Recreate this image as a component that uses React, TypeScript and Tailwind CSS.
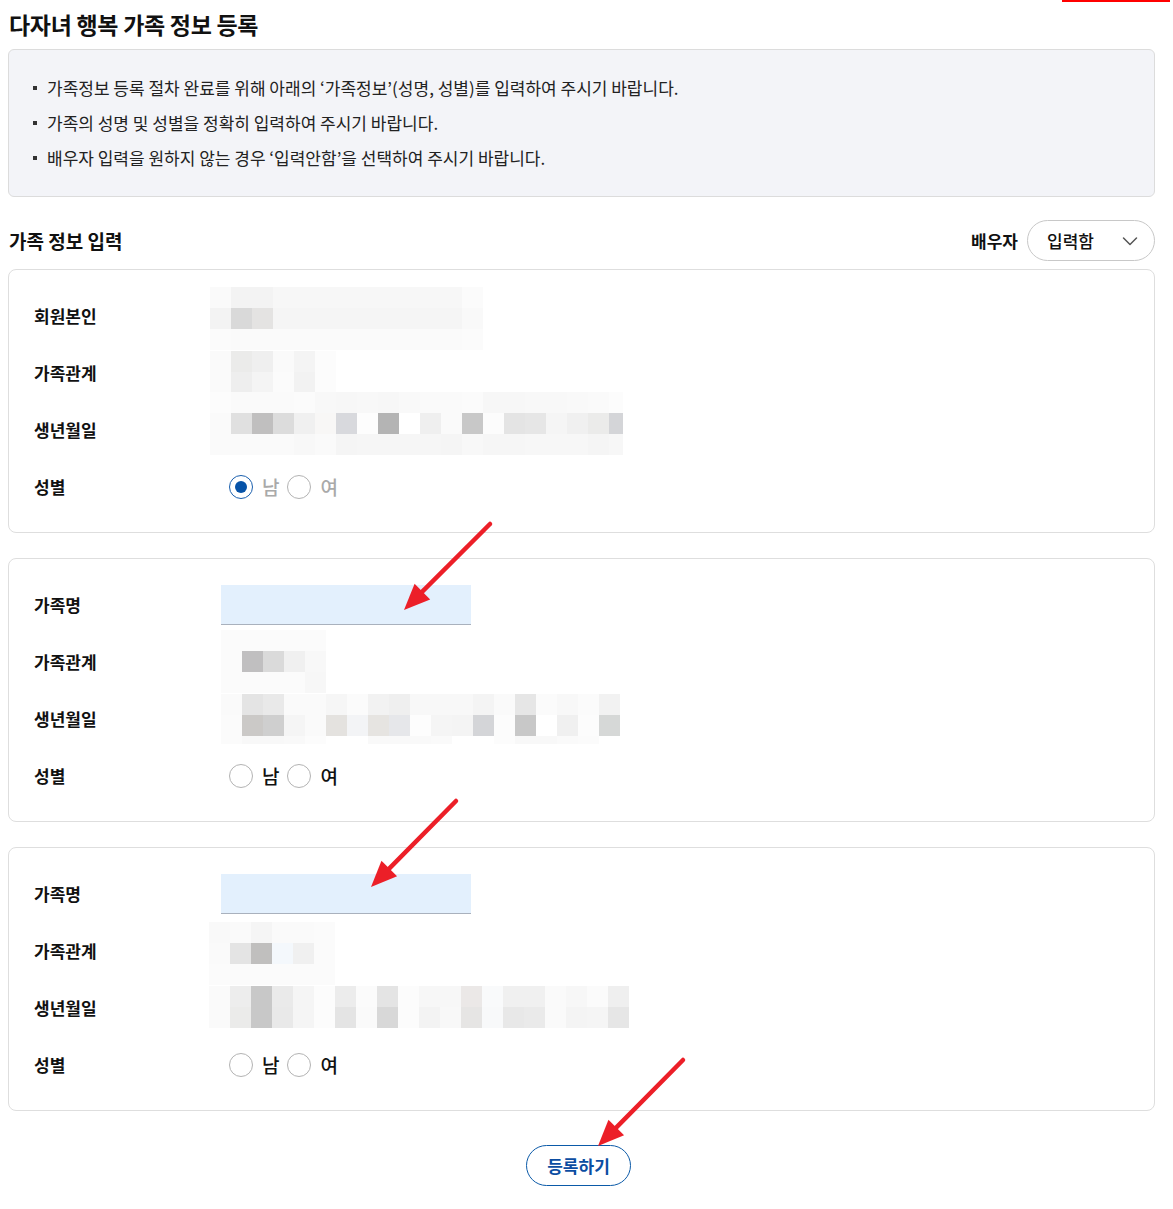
import React from "react";

const FONT = { fontFamily: '"Noto Sans CJK KR", "Noto Sans", sans-serif' };

type MosaicProps = { rows: string[][]; width: number; cell?: number; lastRowH?: number; className?: string };

function Mosaic({ rows, width, cell = 21, lastRowH, className }: MosaicProps) {
  const h = lastRowH ? (rows.length - 1) * cell + lastRowH : rows.length * cell;
  return (
    <svg width={width} height={h} viewBox={`0 0 ${width} ${h}`} className={className} shapeRendering="crispEdges">
      {rows.map((r, ri) =>
        r.map((c, ci) => (
          <rect key={`${ri}-${ci}`} x={ci * cell} y={ri * cell} width={cell} height={cell} fill={`#${c}`} />
        ))
      )}
    </svg>
  );
}

const rep = (c: string, n: number) => Array.from({ length: n }, () => c);

const m1a = [
  ["fafafa", "f3f3f3", "f3f3f3", ...rep("f7f7f7", 9), "fbfbfb"],
  ["f3f3f3", "d9d9d9", "e4e3e2", ...rep("f5f5f5", 9), "f9f9f9"],
  ["fbfbfb", ...rep("fafafa", 11), "fbfbfb"],
];
const m1b = [
  ["fafafa", "ebebea", "efefef", "fafafa", "f4f4f4", "fcfcfc"],
  ["fafafa", "eeeeee", "f4f4f4", "fbfbfb", "f2f2f2", "fcfcfc"],
];
const m1c = [
  ["fcfcfc", "fafafa", "fafafa", "fafafa", "fbfbfb", "f8f8f8", "f7f7f7", "f8f8f8", "f7f7f7", "f9f9f9", "fafafa", "fafafa", "fbfbfb", "f7f7f7", "f7f7f7", "f8f8f8", "f8f8f8", "f9f9f9", "fafafa", "fcfcfc"],
  ["fafafa", "e0e0e0", "c0bfbf", "dcdcdc", "f0f0f0", "f8f7f6", "d8d9dd", "fdfdfd", "b4b4b4", "ffffff", "efefef", "fafafa", "c8c8c8", "fcfcfc", "e4e4e4", "e6e6e6", "f5f5f5", "f0f0f0", "ebebea", "d4d5d8"],
  ["fafafa", "fafafa", "fafafa", "fafafa", "f8f8f8", "fafafa", "f5f5f5", "f6f6f6", "f6f6f6", "f6f6f6", "f6f6f6", "f5f5f5", "f8f8f8", "f6f6f6", "f6f6f6", "f7f7f7", "f7f7f7", "f7f7f7", "f5f5f5", "f7f7f7"],
];
const m2b = [
  rep("fbfbfb", 5),
  ["fbfbfb", "c0bfc0", "dadada", "f0f0f0", "f8f8f8"],
  ["fbfbfb", "fbfbfb", "fbfbfb", "fbfbfb", "f7f7f7"],
];
const m2c = [
  ["fafafa", "e4e4e4", "e9e9e9", "fafafa", "fafafa", "f6f6f6", "fbfbfb", "f2f2f2", "efefef", "f8f8f8", "f8f8f8", "f8f8f8", "f4f4f4", "fafafa", "e6e6e6", "fbfbfb", "f8f8f8", "fbfbfb", "f2f2f2"],
  ["fbfbfb", "cbc9c7", "cfcfcf", "f5f5f5", "fafafa", "e4e2df", "f3f4f6", "e6e4e1", "e6e7ea", "fdfdfd", "f5f5f5", "f4f4f4", "d4d5d8", "fcfcfc", "c8c8c8", "ffffff", "f0f0f0", "fcfcfc", "d6d8d7"],
  ["fbfbfb", "f8f8f8", "f8f8f8", "f9f9f9", "fcfcfc", "ffffff", "ffffff", "f9f9f9", "f9f9f9", "f9f9f9", "fafafa", "ffffff", "ffffff", "fcfcfc", "f8f8f8", "f8f8f8", "fafafa", "fbfbfb", "ffffff"],
];
const m3b = [
  ["f9f9f9", "fafafa", "f5f5f5", "fafafa", "fafafa", "fbfbfb"],
  ["fafafa", "e4e4e4", "c0bfbe", "f4f8fc", "f0f0f0", "fbfbfb"],
  rep("fbfbfb", 6),
];
const m3c = [
  ["fafafa", "ededed", "c8c8c8", "eaeaea", "f5f5f5", "fcfcfc", "ececec", "fbfbfb", "e4e4e4", "fcfcfc", "f7f7f7", "f7f7f7", "ebe8e7", "f9fafb", "f0f0f0", "f0f0f0", "fafafa", "f7f7f7", "fbfbfb", "efefef"],
  ["fafafa", "ebebea", "c8c8c8", "e9e9e9", "f5f5f5", "fcfcfc", "e4e4e4", "fafafa", "d8d8d8", "fcfcfc", "f3f3f3", "f8f8f8", "e6e5e4", "f8f9fa", "e8e8e8", "eaeaea", "fafafa", "f4f4f4", "f5f5f5", "e6e6e6"],
];

function Row({ label, children }: { label: string; children: React.ReactNode }) {
  return (
    <div className="flex h-[57px] items-center">
      <div className="w-[175px] shrink-0 text-[17px] font-bold text-[#111]">{label}</div>
      <div className="flex items-center">{children}</div>
    </div>
  );
}

function Radio({ checked, disabled }: { checked?: boolean; disabled?: boolean }) {
  return (
    <div className="ml-[20px] flex items-center">
      {checked ? (
        <span className="flex h-[24px] w-[24px] items-center justify-center rounded-full border-[1.5px] border-[#1a5fae] bg-white">
          <span className="h-[12px] w-[12px] rounded-full bg-[#0753a8]" />
        </span>
      ) : (
        <span className="h-[24px] w-[24px] rounded-full border border-[#b3b3b3] bg-white" />
      )}
      <span className={`ml-[9px] text-[19px] font-medium leading-none ${disabled ? "text-[#a9a9a9]" : "text-[#111]"}`}>남</span>
      <span className="ml-[8px] h-[24px] w-[24px] rounded-full border border-[#b3b3b3] bg-white" />
      <span className={`ml-[9px] text-[19px] font-medium leading-none ${disabled ? "text-[#a9a9a9]" : "text-[#111]"}`}>여</span>
    </div>
  );
}

function NameInput() {
  return <div className="ml-[12px] h-[40px] w-[250px] border-b border-[#a9b1bd] bg-[#e3f0fd]" />;
}

function Card({ children }: { children: React.ReactNode }) {
  return <div className="rounded-[8px] border border-[#dedede] bg-white py-[17px] pl-[25px]">{children}</div>;
}

function Arrow({ tail, tip }: { tail: [number, number]; tip: [number, number] }) {
  const dx = tip[0] - tail[0];
  const dy = tip[1] - tail[1];
  const len = Math.hypot(dx, dy);
  const ux = dx / len;
  const uy = dy / len;
  const hl = 26;
  const hw = 11;
  const bx = tip[0] - hl * ux;
  const by = tip[1] - hl * uy;
  const nx = -uy;
  const ny = ux;
  const lx = tip[0] - (hl - 4) * ux;
  const ly = tip[1] - (hl - 4) * uy;
  return (
    <g>
      <line x1={tail[0]} y1={tail[1]} x2={lx} y2={ly} stroke="#ec1f28" strokeWidth={4.5} strokeLinecap="round" />
      <polygon
        points={`${tip[0]},${tip[1]} ${bx + hw * nx},${by + hw * ny} ${bx - hw * nx},${by - hw * ny}`}
        fill="#ec1f28"
      />
    </g>
  );
}

export default function App() {
  return (
    <div className="relative min-h-[1209px] w-[1173px] bg-white" style={FONT}>
      <div className="pl-[8px] pr-[18px] pt-[7px]">
        <h1 className="h-[34px] pl-[1px] text-[23px] font-bold leading-[34px] tracking-[-0.3px] text-[#111]">다자녀 행복 가족 정보 등록</h1>

        <div className="mt-[8px] rounded-[6px] border border-[#dcdcdc] bg-[#f3f4f8] pb-[21px] pt-[20px]">
          {[
            "가족정보 등록 절차 완료를 위해 아래의 ‘가족정보’(성명, 성별)를 입력하여 주시기 바랍니다.",
            "가족의 성명 및 성별을 정확히 입력하여 주시기 바랍니다.",
            "배우자 입력을 원하지 않는 경우 ‘입력안함’을 선택하여 주시기 바랍니다.",
          ].map((t) => (
            <div key={t} className="flex h-[35px] items-center">
              <span className="ml-[24px] h-[4px] w-[4px] shrink-0 bg-[#333]" />
              <span className="ml-[10px] text-[17px] leading-[35px] text-[#222]">{t}</span>
            </div>
          ))}
        </div>

        <div className="mb-[8px] mt-[23px] flex h-[41px] items-center justify-between">
          <div className="pl-[1px] text-[19px] font-semibold leading-none text-[#111]">가족 정보 입력</div>
          <div className="flex items-center">
            <span className="text-[17px] font-bold leading-none text-[#111]">배우자</span>
            <div className="ml-[9px] flex h-[41px] w-[128px] items-center justify-between rounded-full border border-[#c8c8c8] bg-white pl-[19px] pr-[15px]">
              <span className="text-[17px] font-medium leading-none text-[#111]">입력함</span>
              <svg width="18" height="18" viewBox="0 0 18 18" fill="none">
                <path d="M2.5 6 L9 12.5 L15.5 6" stroke="#555" strokeWidth="1.5" strokeLinecap="round" strokeLinejoin="round" />
              </svg>
            </div>
          </div>
        </div>

        <div className="flex flex-col gap-[25px]">
          <Card>
            <Row label="회원본인">
              <Mosaic rows={m1a} width={273} className="ml-[1px] translate-y-[3px]" />
            </Row>
            <Row label="가족관계">
              <Mosaic rows={m1b} width={126} className="ml-[1px] -translate-y-[1px]" />
            </Row>
            <Row label="생년월일">
              <Mosaic rows={m1c} width={413} className="ml-[1px] -translate-y-[6px]" />
            </Row>
            <Row label="성별">
              <Radio checked disabled />
            </Row>
          </Card>

          <Card>
            <Row label="가족명">
              <NameInput />
            </Row>
            <Row label="가족관계">
              <Mosaic rows={m2b} width={105} className="ml-[12px]" />
            </Row>
            <Row label="생년월일">
              <Mosaic rows={m2c} width={399} lastRowH={8} className="ml-[12px]" />
            </Row>
            <Row label="성별">
              <Radio />
            </Row>
          </Card>

          <Card>
            <Row label="가족명">
              <NameInput />
            </Row>
            <Row label="가족관계">
              <Mosaic rows={m3b} width={126} className="translate-y-[3px]" />
            </Row>
            <Row label="생년월일">
              <Mosaic rows={m3c} width={420} className="-translate-y-[1px]" />
            </Row>
            <Row label="성별">
              <Radio />
            </Row>
          </Card>
        </div>

        <div className="mt-[34px] flex justify-center pr-[6px]">
          <button className="flex h-[41px] w-[105px] items-center justify-center rounded-full border-[1.5px] border-[#0b5aa8] bg-white text-[17px] font-bold leading-none text-[#0b4da2]">
            등록하기
          </button>
        </div>
      </div>

      <div className="absolute left-[1062px] top-0 h-[1.5px] w-[108px] bg-[#ff0000]" />

      <svg className="pointer-events-none absolute left-0 top-0" width="1173" height="1209" viewBox="0 0 1173 1209">
        <Arrow tail={[490, 524]} tip={[404, 610]} />
        <Arrow tail={[456, 801]} tip={[371, 887]} />
        <Arrow tail={[683, 1060]} tip={[598, 1146]} />
      </svg>
    </div>
  );
}
